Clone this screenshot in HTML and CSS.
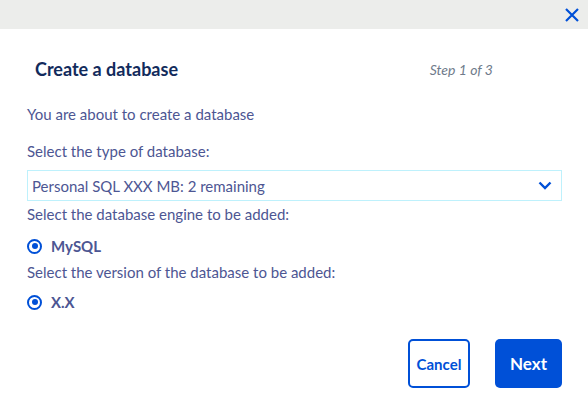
FILE: index.html
```html
<!DOCTYPE html>
<html lang="en">
<head>
    <meta charset="UTF-8">
    <title>Create a database</title>
    <link rel="stylesheet" href="styles.css">
</head>
<body>
    <!-- top bar with close button -->
    <div class="top-bar">
        <button class="close-btn" aria-label="Close">
            <svg width="14" height="14" viewBox="0 0 14 14"><path d="M1 1 L13 13 M13 1 L1 13" stroke="#0050d7" stroke-width="2.2" fill="none"/></svg>
        </button>
    </div>

    <div class="modal-body">
        <div class="modal-header">
            <h1 class="title">Create a database</h1>
            <span class="step">Step 1 of 3</span>
        </div>

        <p class="intro">You are about to create a database</p>

        <label class="field-label">Select the type of database:</label>
        <div class="select-box">
            <span>Personal SQL XXX MB: 2 remaining</span>
            <svg width="14" height="9" viewBox="0 0 14 9"><path d="M1.5 1.5 L7 7 L12.5 1.5" stroke="#0050d7" stroke-width="2.4" fill="none"/></svg>
        </div>

        <label class="field-label">Select the database engine to be added:</label>
        <div class="radio-row">
            <span class="radio"></span>
            <span class="radio-text">MySQL</span>
        </div>

        <label class="field-label">Select the version of the database to be added:</label>
        <div class="radio-row version-row">
            <span class="radio"></span>
            <span class="radio-text">X.X</span>
        </div>

        <div class="actions">
            <button class="btn btn-cancel">Cancel</button>
            <button class="btn btn-next">Next</button>
        </div>
    </div>
</body>
</html>
```

FILE: styles.css
```css
body {
    margin: 0;
    font-family: Lato, "Open Sans", sans-serif;
    background-color: #fff;
    width: 588px;
    height: 394px;
    overflow: hidden;
}

.top-bar {
    height: 29px;
    background-color: #ecedeb;
    display: flex;
    justify-content: flex-end;
    align-items: center;
}

.close-btn {
    background: none;
    border: none;
    padding: 0;
    margin-right: 9px;
    margin-top: 1px;
    display: flex;
}

.modal-body {
    padding: 0 26px 0 27px;
}

.modal-header {
    display: flex;
    justify-content: space-between;
    align-items: center;
    margin-top: 29px;
    padding-left: 8px;
    padding-right: 69px;
}

.title {
    margin: 0;
    font-size: 18px;
    font-weight: bold;
    color: #122b5c;
}

.step {
    font-size: 14px;
    font-style: italic;
    color: #6f7b8b;
}

.intro {
    margin: 25px 0 0 0;
    font-size: 15px;
    color: #4d5693;
}

.field-label {
    display: block;
    font-size: 15px;
    color: #4d5693;
    margin-top: 19px;
}

.select-box {
    margin-top: 10px;
    height: 29px;
    border: 1px solid #bef1fc;
    display: flex;
    align-items: center;
    justify-content: space-between;
    padding: 0 9px 0 4px;
    font-size: 15px;
    color: #4d5693;
}

.select-box + .field-label {
    margin-top: 4px;
}

.radio-row {
    display: flex;
    align-items: center;
    margin-top: 14px;
    margin-bottom: -11px;
}

.version-row {
    margin-top: 12px;
}

.radio {
    width: 11px;
    height: 11px;
    border: 2px solid #0050d7;
    border-radius: 50%;
    position: relative;
    margin-right: 9px;
}

.radio::after {
    content: "";
    position: absolute;
    left: 2.5px;
    top: 2.5px;
    width: 6px;
    height: 6px;
    border-radius: 50%;
    background-color: #0050d7;
}

.radio-text {
    font-size: 15px;
    font-weight: bold;
    color: #4d5693;
}

.actions {
    display: flex;
    justify-content: flex-end;
    gap: 25px;
    margin-top: 39px;
}

.btn {
    height: 49px;
    border-radius: 5px;
    font-family: Lato, "Open Sans", sans-serif;
    font-weight: bold;
}

.btn-cancel {
    width: 62px;
    background: #fff;
    border: 2px solid #0050d7;
    color: #0050d7;
    font-size: 15px;
    padding: 0;
}

.btn-next {
    width: 67px;
    background: #0050d7;
    border: none;
    color: #fff;
    font-size: 17px;
}
```
